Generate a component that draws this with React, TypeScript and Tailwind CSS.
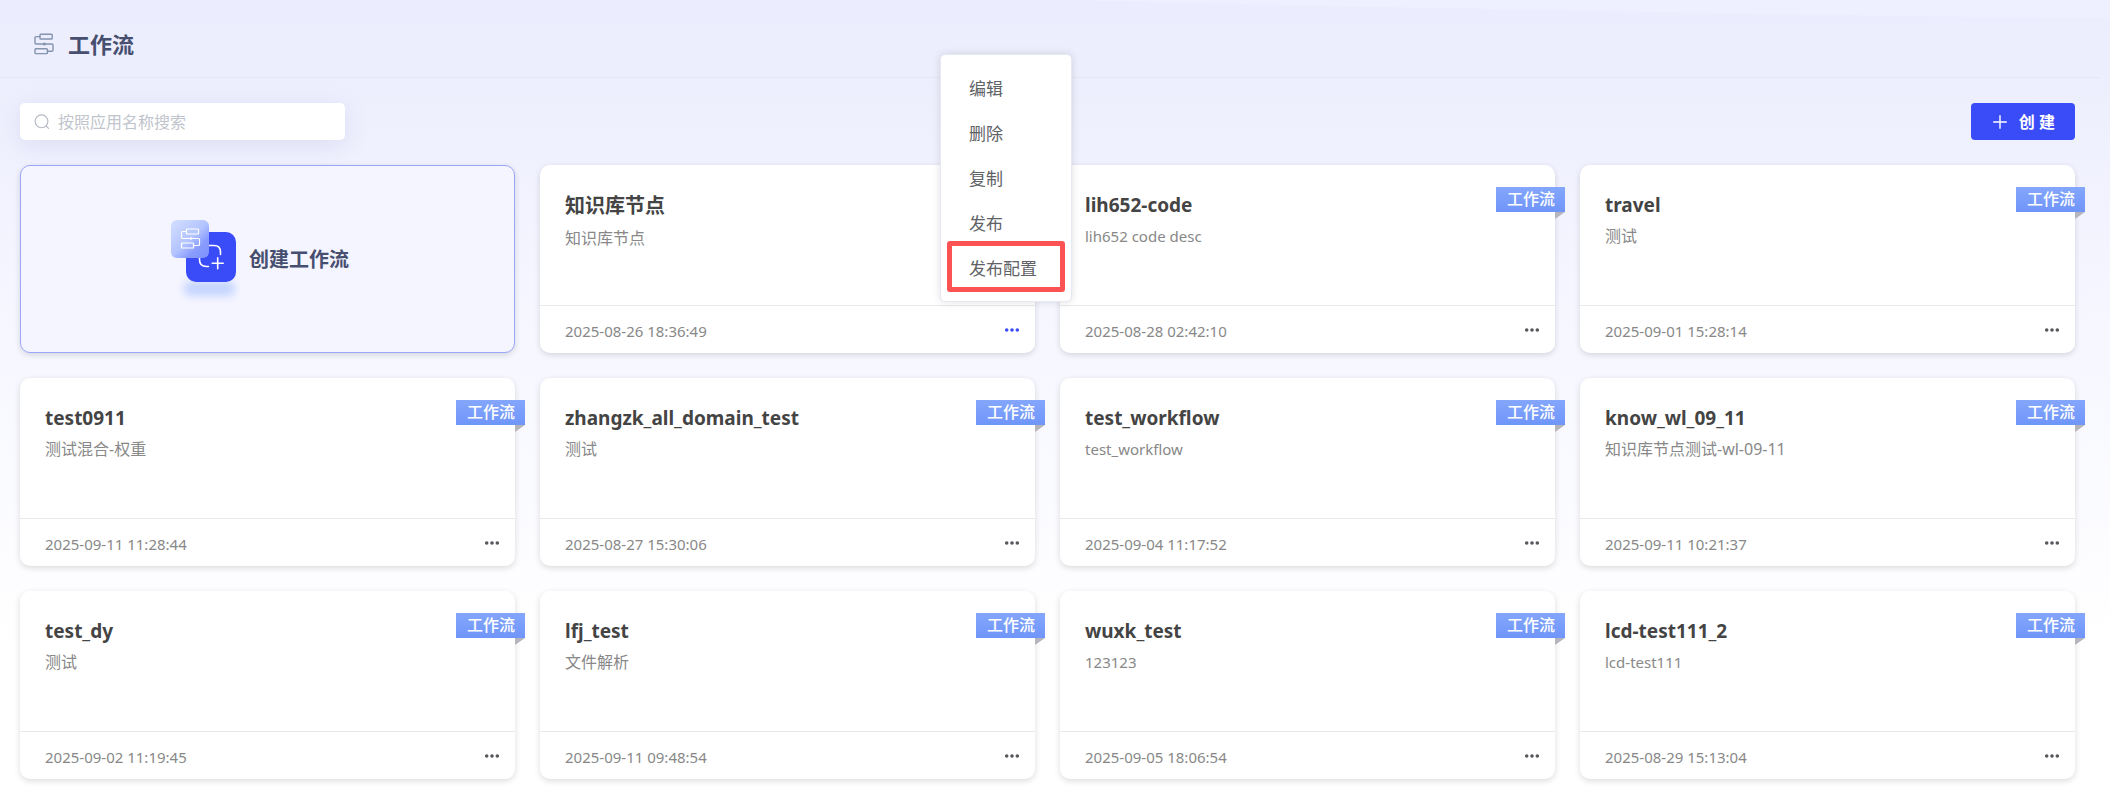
import React from "react";

type Workflow = { name: string; desc: string; time: string; menuOpen?: boolean };

const workflows: Workflow[] = [
  { name: "知识库节点", desc: "知识库节点", time: "2025-08-26 18:36:49", menuOpen: true },
  { name: "lih652-code", desc: "lih652 code desc", time: "2025-08-28 02:42:10" },
  { name: "travel", desc: "测试", time: "2025-09-01 15:28:14" },
  { name: "test0911", desc: "测试混合-权重", time: "2025-09-11 11:28:44" },
  { name: "zhangzk_all_domain_test", desc: "测试", time: "2025-08-27 15:30:06" },
  { name: "test_workflow", desc: "test_workflow", time: "2025-09-04 11:17:52" },
  { name: "know_wl_09_11", desc: "知识库节点测试-wl-09-11", time: "2025-09-11 10:21:37" },
  { name: "test_dy", desc: "测试", time: "2025-09-02 11:19:45" },
  { name: "lfj_test", desc: "文件解析", time: "2025-09-11 09:48:54" },
  { name: "wuxk_test", desc: "123123", time: "2025-09-05 18:06:54" },
  { name: "lcd-test111_2", desc: "lcd-test111", time: "2025-08-29 15:13:04" },
];

const menuItems = ["编辑", "删除", "复制", "发布", "发布配置"];

const hasCjk = (text: string) => /[\u4e00-\u9fff]/.test(text);

function FlowIcon({ className }: { className: string }) {
  return (
    <svg viewBox="0 0 20 22" className={className} fill="none" stroke="currentColor" strokeWidth="1.4" strokeLinejoin="round" strokeLinecap="round" aria-hidden="true">
      <rect x="6" y="1.2" width="12.2" height="4.8" rx="0.8" />
      <rect x="1" y="15.8" width="12.4" height="4.8" rx="0.8" />
      <path d="M6 3.6H2.2Q1 3.6 1 4.8V9.8Q1 11 2.2 11H17.8Q19 11 19 12.2V17Q19 18.2 17.8 18.2H13.4" />
      <circle cx="10.4" cy="11" r="0.8" fill="currentColor" />
    </svg>
  );
}

function CreateArt() {
  return (
    <svg viewBox="0 0 75 90" className="h-[90px] w-[75px]" fill="none" aria-hidden="true">
      <defs>
        <linearGradient id="glass" x1="8" y1="8" x2="40" y2="42" gradientUnits="userSpaceOnUse">
          <stop offset="0" stopColor="#d0dcff" />
          <stop offset="0.5" stopColor="#b3c4ff" />
          <stop offset="0.75" stopColor="#8a9dfd" />
          <stop offset="1" stopColor="#7f93fb" />
        </linearGradient>
        <filter id="soft" x="-30%" y="-100%" width="160%" height="300%">
          <feGaussianBlur stdDeviation="4" />
        </filter>
      </defs>
      <rect x="19" y="66" width="51" height="15" rx="6" fill="#c3d4ff" filter="url(#soft)" />
      <rect x="21" y="17" width="50" height="50" rx="10" fill="#3a4bf8" />
      <g stroke="#fff" strokeWidth="1.6" strokeLinecap="round">
        <path d="M43 30.5H49Q55.5 30.5 55.5 37V39.5" />
        <path d="M34.5 42V44.5Q34.5 51.5 41.5 51.5H43.5" />
        <path d="M52.7 42.8V53.8M47.2 48.3H58.2" />
      </g>
      <rect x="6" y="5" width="38" height="38" rx="6" fill="url(#glass)" />
      <g stroke="#fff" strokeWidth="1.2" strokeLinejoin="round">
        <rect x="21.5" y="14" width="12" height="5" rx="0.6" />
        <rect x="16.5" y="28" width="12" height="5" rx="0.6" />
        <path d="M21.5 16.5H17.5Q16.5 16.5 16.5 17.5V22.5Q16.5 23.5 17.5 23.5H33.5Q34.5 23.5 34.5 24.5V29.5Q34.5 30.5 33.5 30.5H28.5" />
        <circle cx="26" cy="23.5" r="0.7" fill="#fff" />
      </g>
    </svg>
  );
}

function Ribbon() {
  return (
    <div className="absolute top-[22px] -right-[10px]">
      <div className="h-[25px] bg-linear-to-b from-[#84a6fc] to-[#6f95f9] pr-[10px] pl-[11px] text-base leading-[25px] font-medium text-white">
        工作流
      </div>
      <svg viewBox="0 0 10 7" className="ml-auto block h-[7px] w-[10px]" aria-hidden="true">
        <path d="M0 0H10L0 7Z" fill="#b5b5bd" />
      </svg>
    </div>
  );
}

function ActionMenu() {
  return (
    <ul className="absolute right-[-37px] bottom-[51px] z-10 w-[132px] rounded-[5px] border border-[#e6e8f2] bg-white pt-[11px] pb-[10px] shadow-[0_0_8px_rgba(0,0,0,0.12)]">
      {menuItems.map((item) => (
        <li key={item} className="relative">
          <button type="button" className="block h-[45px] w-full pl-[28px] text-left text-[17px] text-[#606266]">
            {item}
          </button>
          {item === "发布配置" && (
            <span className="pointer-events-none absolute inset-x-[6px] -top-[5px] h-[51px] rounded-[3px] border-5 border-[#fb5353]" />
          )}
        </li>
      ))}
    </ul>
  );
}

function WorkflowCard({ item }: { item: Workflow }) {
  return (
    <article className="relative flex h-[188px] flex-col rounded-[10px] bg-white shadow-[0_2px_6px_rgba(0,0,0,0.14)]">
      <div className="flex-1 px-[25px] pt-[25px]">
        <h2 className={hasCjk(item.name) ? "text-xl leading-8 font-bold text-[#444]" : "text-[19px] leading-[30px] font-bold text-[#444]"}>
          {item.name}
        </h2>
        <p className={hasCjk(item.desc) ? "mt-1 text-base leading-6 text-[#888]" : "mt-1 text-[15px] leading-6 text-[#888]"}>
          {item.desc}
        </p>
      </div>
      {!item.menuOpen && <Ribbon />}
      <footer className="flex h-12 items-center justify-between border-t border-[#e9e9eb] pr-[15px] pl-[25px]">
        <time className="pt-[2px] text-[15px] leading-6 text-[#888]">{item.time}</time>
        <button type="button" aria-label="更多" aria-expanded={!!item.menuOpen} className={item.menuOpen ? "text-[#3a4bf8]" : "text-[#55575c]"}>
          <svg viewBox="0 0 16 6" className="h-[6px] w-4" fill="currentColor" aria-hidden="true">
            <circle cx="2.7" cy="3" r="1.8" />
            <circle cx="8" cy="3" r="1.8" />
            <circle cx="13.3" cy="3" r="1.8" />
          </svg>
        </button>
      </footer>
      {item.menuOpen && <ActionMenu />}
    </article>
  );
}

export default function App() {
  return (
    <div className="relative min-h-screen bg-linear-to-b from-[#ebecfd] via-[#f6f7ff] via-42% to-white to-82% font-['Noto_Sans','Noto_Sans_CJK_SC',sans-serif]">
      <svg viewBox="0 0 100 20" preserveAspectRatio="none" className="pointer-events-none absolute top-0 right-0 h-5 w-1/2" aria-hidden="true">
        <path d="M0 0H100V19Q45 11 0 0Z" fill="#eeefff" />
      </svg>
      <header className="mr-[10px] flex h-[78px] items-center gap-[14px] border-b border-[#e6e8ef] pt-[10px] pl-[34px]">
        <FlowIcon className="h-[22px] w-5 text-[#8494ad]" />
        <h1 className="text-[22px] leading-8 font-bold text-[#474f70]">工作流</h1>
      </header>
      <main className="pt-[25px] pr-[35px] pb-[9px] pl-5">
        <div className="mb-[25px] flex items-center justify-between">
          <label className="flex h-[37px] w-[325px] items-center gap-2 rounded-[5px] bg-white px-[14px] shadow-[0_5px_25px_rgba(100,110,180,0.15)]">
            <svg viewBox="0 0 16 16" className="size-4 shrink-0 text-[#b4b8c2]" fill="none" stroke="currentColor" strokeWidth="1.1" strokeLinecap="round" aria-hidden="true">
              <circle cx="7.5" cy="7.3" r="6.4" />
              <path d="M12.1 12L14.6 14.4" />
            </svg>
            <input type="text" aria-label="按照应用名称搜索" placeholder="按照应用名称搜索" className="w-full bg-transparent text-base text-[#606266] outline-none placeholder:text-[#c0c4cc]" />
          </label>
          <button type="button" className="flex h-[37px] items-center gap-[12px] rounded-[4px] bg-[#3a4bf8] pr-5 pl-[22px] text-base font-bold text-white">
            <svg viewBox="0 0 14 14" className="size-[14px]" stroke="currentColor" strokeWidth="1.4" strokeLinecap="round" aria-hidden="true">
              <path d="M7 0.7V13.3M0.7 7H13.3" />
            </svg>
            创 建
          </button>
        </div>
        <div className="grid grid-cols-4 gap-[25px]">
          <button type="button" className="flex h-[188px] items-center justify-center gap-[9px] rounded-[10px] border border-[#9ba6fb] bg-[#f5f5ff] pt-[2px] pr-[21px] text-xl font-bold text-[#474f70] shadow-[0_2px_6px_rgba(0,0,0,0.14)]">
            <CreateArt />
            创建工作流
          </button>
          {workflows.map((item) => (
            <WorkflowCard key={item.name} item={item} />
          ))}
        </div>
      </main>
    </div>
  );
}
